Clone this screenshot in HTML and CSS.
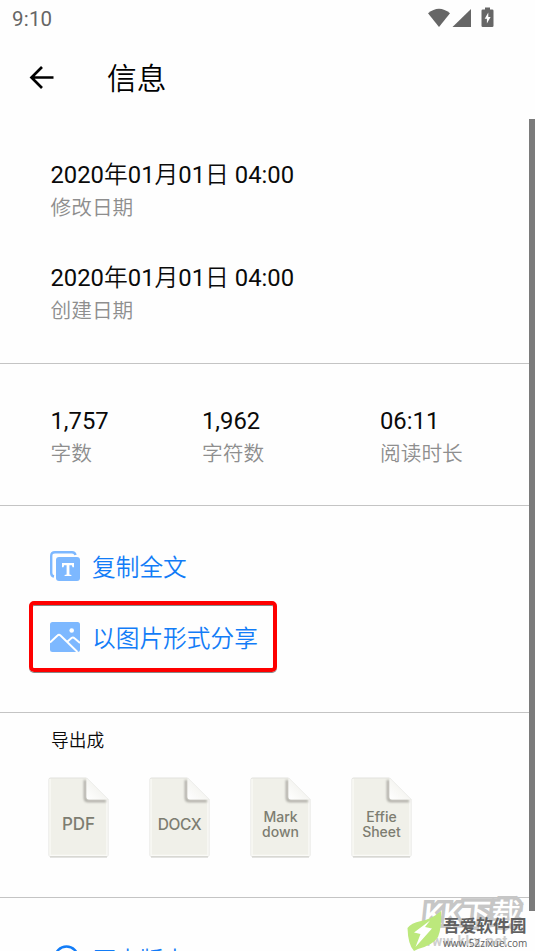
FILE: index.html
```html
<!DOCTYPE html>
<html lang="zh-CN">
<head>
<meta charset="utf-8">
<title>信息</title>
<link rel="stylesheet" href="styles.css">
</head>
<body>
<div class="screen">
  <header class="status">
    <span class="clock">9:10</span>
    <svg class="status-icons" width="68" height="22" viewBox="0 0 68 22" fill="#666">
      <path d="M0 5.2Q11-3.8 22 5.2L11 19z"/>
      <path d="M43 1v18H24.500z"/>
      <path fill-rule="evenodd" d="M57-.5h5v2h2.200q1.300 0 1.300 1.300v15q0 1.200-1.300 1.200h-9.400q-1.300 0-1.300-1.200v-15q0-1.300 1.300-1.300H57zM60.300 4.500l-3.600 6.300h2.200v4.700l3.700-6.600h-2.300z"/>
    </svg>
  </header>
  <div class="titlebar">
    <svg class="back" width="26" height="26" viewBox="0 0 26 26" fill="none" stroke="#000" stroke-width="2.700"><path d="M24.500 12.500H3M13 2L2.500 12.500 13 23"/></svg>
    <h1>信息</h1>
  </div>
  <main>
    <section class="dates">
      <div class="field"><div class="value">2020<i>年</i>01<i>月</i>01<i>日</i> 04:00</div><div class="label">修改日期</div></div>
      <div class="field"><div class="value">2020<i>年</i>01<i>月</i>01<i>日</i> 04:00</div><div class="label">创建日期</div></div>
    </section>
    <section class="stats">
      <div class="field"><div class="value">1,757</div><div class="label">字数</div></div>
      <div class="field"><div class="value">1,962</div><div class="label">字符数</div></div>
      <div class="field"><div class="value">06:11</div><div class="label">阅读时长</div></div>
    </section>
    <section class="actions">
      <div class="action">
        <svg width="30" height="30" viewBox="0 0 30 30">
          <path d="M4 25.500Q1.200 25 1.200 22V5Q1.200 1.200 5 1.200h17Q25 1.200 25.500 4" fill="none" stroke="#7db8ff" stroke-width="2.400"/>
          <rect x="6" y="6" width="24" height="24" rx="3" fill="#7db8ff"/>
          <path d="M12 12h12v4.200h-1.500l-.6-2h-2.500v9.300l2 .4V25h-6.800v-1.100l2-.4v-9.300h-2.500l-.6 2H12z" fill="#fff"/>
        </svg>
        <span>复制全文</span>
      </div>
      <div class="action highlighted">
        <svg width="30" height="30" viewBox="0 0 30 30">
          <rect width="30" height="30" rx="2.500" fill="#7db8ff"/>
          <circle cx="21.700" cy="8.500" r="2.300" fill="#fff"/>
          <path d="M0 20.500l7.500-7Q9 12 10.500 13.500L27.500 30M17 20l4.500-4Q23 14.800 24.500 16.200L30 21" fill="none" stroke="#fff" stroke-width="1.900"/>
        </svg>
        <span>以图片形式分享</span>
      </div>
    </section>
    <section class="export">
      <h2>导出成</h2>
      <div class="files">
        <div class="file pdf"><svg class="paper" viewBox="0 0 62 82"><use href="#sheet"/></svg><span>PDF</span></div>
        <div class="file docx"><svg class="paper" viewBox="0 0 62 82"><use href="#sheet"/></svg><span>DOCX</span></div>
        <div class="file"><svg class="paper" viewBox="0 0 62 82"><use href="#sheet"/></svg><span>Mark<br>down</span></div>
        <div class="file"><svg class="paper" viewBox="0 0 62 82"><use href="#sheet"/></svg><span>Effie<br>Sheet</span></div>
      </div>
    </section>
    <section class="history">
      <div class="action">
        <svg width="30" height="30" viewBox="0 0 30 30"><circle cx="16.500" cy="14" r="11.500" fill="none" stroke="#127cf7" stroke-width="2.400"/></svg>
        <span>历史版本</span>
      </div>
    </section>
  </main>
  <div class="scrollbar"></div>
  <div class="mark-back"><b>KK下载</b><span>www.kkx.net</span></div>
  <div class="mark-front">
    <svg width="36" height="42" viewBox="0 0 36 42"><path d="M34 0Q35 16 31 26Q26 34 11 38L7 40Q1 34 .5 17Q4 12 14 10Q25 8 34 0z" fill="#bce87c"/><path d="M23 9.500L7 21.500l6.500 1.500-5 13L25 17.500l-7-1.500z" fill="#fff"/></svg>
    <div><b>吾爱软件园</b><span>www.52zixue.com</span></div>
  </div>
</div>
<svg class="defs" width="0" height="0">
  <defs>
    <linearGradient id="fold" x1="0" y1="1" x2="1" y2="0"><stop offset="0" stop-color="#fff"/><stop offset="1" stop-color="#ecece5"/></linearGradient>
    <filter id="soft" x="-30%" y="-30%" width="160%" height="160%"><feGaussianBlur stdDeviation="1"/></filter>
    <g id="sheet">
      <path d="M2.500 1h36L60 22.500V78q0 1.500-1.500 1.500h-56Q1 79.500 1 78V2.500Q1 1 2.500 1z" fill="#f0f0e9" stroke="#e2e2de" stroke-width="1"/>
      <path d="M2 2v76.500h57V23" fill="none" stroke="#fafaf7" stroke-width="1.300"/>
      <path d="M2 80h57" stroke="#c8c8c3" stroke-width="1"/>
      <path d="M37 3v18q0 3 3 3h18" fill="none" stroke="#aaa9a2" stroke-width="2.500" filter="url(#soft)"/>
      <path d="M38.500 1L60 22.500H41q-2.500 0-2.500-2.500z" fill="url(#fold)"/>
    </g>
  </defs>
</svg>
</body>
</html>
```
FILE: styles.css
```css
* { box-sizing: border-box; }
body { margin: 0; background: #fefefe; font-family: Roboto, "Noto Sans CJK SC", sans-serif; color: #0a0a0a; }
h1, h2 { margin: 0; font-weight: 350; }
svg { display: block; overflow: visible; flex: none; }
.defs { position: absolute; }
.screen { position: relative; width: 535px; height: 951px; overflow: hidden; }
.status { height: 36px; padding: 8px 39px 0 12px; display: flex; justify-content: space-between; }
.clock { font-size: 20.500px; line-height: 22px; color: #666; letter-spacing: .2px; }
.titlebar { height: 83px; display: flex; align-items: center; padding: 0 29px; gap: 52px; }
h1 { font-size: 29.700px; line-height: 40px; color: #000; padding-top: 2px; }
section { border-bottom: 1px solid #c4c4c4; }
.value { font-size: 23.800px; line-height: 32px; font-weight: 400; white-space: nowrap; }
.value i { font-style: normal; font-weight: 350; }
.label { font-size: 20.700px; line-height: 32px; color: #8e8e8e; font-weight: 350; white-space: nowrap; padding-top: 1px; }
.dates { height: 245px; padding: 40px 50.500px 0; display: flex; flex-direction: column; gap: 38px; }
.stats { height: 142px; padding: 41px 50.500px 0; display: grid; grid-template-columns: 151.500px 178px 1fr; }
.actions { height: 207px; padding: 30px 29px 0; }
.action { display: flex; align-items: center; gap: 12px; height: 60px; padding-left: 21px; font-size: 23.700px; font-weight: 350; color: #127cf7; }
.highlighted { width: 248px; height: 71px; margin-top: 5px; padding-left: 17px; border: 4px solid #fe0000; border-radius: 5px; box-shadow: 0 1px 0 #888, inset 0 1px 0 #888; }
.export { height: 185px; padding: 14px 48px 0; }
h2 { font-size: 17.700px; line-height: 28px; padding-left: 3px; }
.files { display: flex; gap: 39px; margin-top: 22px; }
.file { display: grid; width: 62px; height: 82px; font: 500 14px/15px Inter, sans-serif; color: #7d7d71; text-align: center; }
.file > * { grid-area: 1 / 1; }
.file span { align-self: center; padding-top: 12px; padding-right: 1px; }
.pdf span { font-size: 17px; }
.docx span { font-size: 15.500px; letter-spacing: -.4px; }
.paper { width: 62px; height: 82px; }
.history { padding: 31px 29px 0; border: 0; }
.scrollbar { position: absolute; right: 0; top: 119px; width: 6px; height: 792px; background: #7b7b7b; }
.mark-back { position: absolute; left: 424px; top: 897px; width: 116px; color: #fff; white-space: nowrap; }
.mark-back b { display: block; font-size: 29px; line-height: 34px; font-weight: 500; letter-spacing: .5px; transform: skewX(-6deg); -webkit-text-stroke: 7px #c6c6c6; paint-order: stroke fill; }
.mark-back span { display: block; font-size: 14px; line-height: 20px; letter-spacing: .6px; font-weight: 700; color: #cecece; margin-left: -3px; }
.mark-front { position: absolute; left: 407px; top: 911px; display: flex; color: #606060; white-space: nowrap; }
.mark-front b { display: block; font-size: 16.700px; line-height: 20px; font-weight: 700; margin-top: 6px; }
.mark-front span { display: block; font: 500 10px/12px "Open Sans", sans-serif; }
```
